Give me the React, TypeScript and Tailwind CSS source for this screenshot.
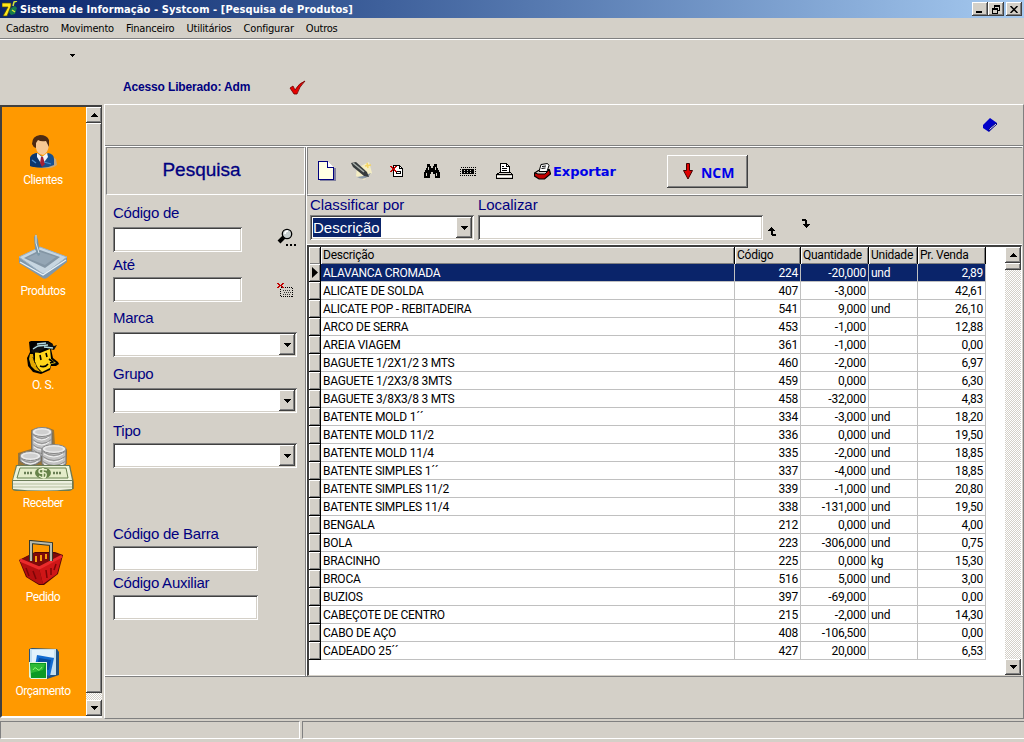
import React from 'react';

const SUNKEN = 'shadow-[inset_1px_1px_#808080,inset_-1px_-1px_#fff,inset_2px_2px_#404040,inset_-2px_-2px_#d4d0c8]';
const RAISED = 'shadow-[inset_-1px_-1px_#404040,inset_1px_1px_#fff,inset_-2px_-2px_#808080]';
const DITHER = 'bg-[repeating-conic-gradient(#d4d0c8_0_25%,#fff_0_50%)] bg-[length:2px_2px]';

const products: [string, string, string, string, string][] = [
  ['ALAVANCA CROMADA', '224', '-20,000', 'und', '2,89'],
  ['ALICATE DE SOLDA', '407', '-3,000', '', '42,61'],
  ['ALICATE POP - REBITADEIRA', '541', '9,000', 'und', '26,10'],
  ['ARCO DE SERRA', '453', '-1,000', '', '12,88'],
  ['AREIA VIAGEM', '361', '-1,000', '', '0,00'],
  ['BAGUETE 1/2X1/2 3 MTS', '460', '-2,000', '', '6,97'],
  ['BAGUETE 1/2X3/8 3MTS', '459', '0,000', '', '6,30'],
  ['BAGUETE 3/8X3/8 3 MTS', '458', '-32,000', '', '4,83'],
  ['BATENTE MOLD 1´´', '334', '-3,000', 'und', '18,20'],
  ['BATENTE MOLD 11/2', '336', '0,000', 'und', '19,50'],
  ['BATENTE MOLD 11/4', '335', '-2,000', 'und', '18,85'],
  ['BATENTE SIMPLES 1´´', '337', '-4,000', 'und', '18,85'],
  ['BATENTE SIMPLES 11/2', '339', '-1,000', 'und', '20,80'],
  ['BATENTE SIMPLES 11/4', '338', '-131,000', 'und', '19,50'],
  ['BENGALA', '212', '0,000', 'und', '4,00'],
  ['BOLA', '223', '-306,000', 'und', '0,75'],
  ['BRACINHO', '225', '0,000', 'kg', '15,30'],
  ['BROCA', '516', '5,000', 'und', '3,00'],
  ['BUZIOS', '397', '-69,000', '', '0,00'],
  ['CABEÇOTE DE CENTRO', '215', '-2,000', 'und', '14,30'],
  ['CABO DE AÇO', '408', '-106,500', '', '0,00'],
  ['CADEADO 25´´', '427', '20,000', '', '6,53'],
];

function Triangle({ up = false }: { up?: boolean }) {
  return (
    <svg width="7" height="4" viewBox="0 0 7 4" shapeRendering="crispEdges">
      <path d={up ? 'M3 0h1v1h1v1h1v1h1v1H0V3h1V2h1V1h1z' : 'M0 0h7v1H6v1H5v1H4v1H3V3H2V2H1V1H0z'} />
    </svg>
  );
}

function ScrollButton({ up = false }: { up?: boolean }) {
  return (
    <button className={`flex h-4 w-4 shrink-0 items-center justify-center bg-[#d4d0c8] ${RAISED}`}>
      <Triangle up={up} />
    </button>
  );
}

function Combo({ className, children }: { className: string; children?: React.ReactNode }) {
  return (
    <div className={`flex h-[25px] justify-between bg-white p-[2px] ${SUNKEN} ${className}`}>
      <div className="flex items-center">{children}</div>
      <button className={`flex w-4 items-center justify-center bg-[#d4d0c8] ${RAISED}`}>
        <Triangle />
      </button>
    </div>
  );
}

function Field({ label, low, className, children }: { label: string; low?: boolean; className: string; children: React.ReactNode }) {
  return (
    <div className={className}>
      <div className={`h-6 text-[15px] tracking-[-0.25px] text-[#000080] ${low ? 'leading-6' : 'leading-5'}`}>{label}</div>
      {children}
    </div>
  );
}

function TextBox({ className }: { className: string }) {
  return <div className={`h-[25px] bg-white ${SUNKEN} ${className}`} />;
}

function ClientIcon() {
  return (
    <svg width="28" height="34" viewBox="0 0 28 34">
      <path d="M7 31q13 5 21-1l-1-6-5-3z" fill="#c9a97a" />
      <path d="M1 31V23q1-4 7-5l6 4 5-4q6 1 6 6v6q-10 5-24 1z" fill="#17508f" />
      <path d="M1 31V23q1-4 7-5l5 14q-7 1-12-1z" fill="#0d376c" />
      <path d="M8 18l5 4 5-4 1 4-6 8-5-8z" fill="#f3f5fa" />
      <path d="M12 22l2 0 2 7-3 3-2-4z" fill="#a32034" />
      <path d="M5 8q0-7 8-7t7 9q-1 8-6 10-6-1-7-7z" fill="#f7c894" />
      <path d="M3 9Q3 1 11 0q7 0 9 5v7l-3-6q-5 1-8-1l-2 3v5q-3-1-4-4z" fill="#4d2a12" />
      <path d="M15 27l7 2M3 25l4 3" stroke="#4d8fd0" strokeWidth="1.2" />
    </svg>
  );
}

function TabletIcon() {
  return (
    <svg width="50" height="46" viewBox="0 0 50 46">
      <path d="M1 23L22 13l27 10v5L29 44q-3 2-6-1L1 29z" fill="#7f98ad" />
      <path d="M1 23L22 13l27 10-21 16q-3 2-6-1z" fill="#c7d6e1" stroke="#9db1c2" />
      <path d="M6 24l16-8 20 7-15 11z" fill="#8496a5" />
      <path d="M9 24l13-6 16 5-11 8z" fill="#94a6b5" />
      <path d="M2 28l23 13L48 26" fill="none" stroke="#e7f0f5" strokeWidth="1.4" />
      <path d="M16 3l2-3 2 6 2 15-2 1-3-7z" fill="#7b96a6" />
      <path d="M18 1v8l3 10" stroke="#dde9ef" fill="none" />
    </svg>
  );
}

function ServiceIcon() {
  return (
    <svg width="33" height="33" viewBox="0 0 33 33">
      <path d="M3 11L0 17l1 8 5 6 8 2 9-4 1-4 5 0 3-2-1-2-5-4-2-9 2-5-8-5-10 0-6 3z" fill="#000" />
      <path d="M3 13l-1 5 2 7 4 4 6 2-4-5-3-6-1-7z" fill="#e4a800" />
      <path d="M8 11l5 1 10-4 1 10 5 4-5 1-1 4-8 4-4-4-3-6z" fill="#ffd51a" />
      <path d="M4 10l3-5 5-4 9 0 6 4 3-1-3 5-8-2-7 4-6 1z" fill="#111" />
      <path d="M6 8l5-3 10-1M10 3l9-1M17 6l9 1" stroke="#b5dce0" strokeWidth="1.3" fill="none" />
      <path d="M13 14l1 5M19 12l1 4M13 25q5 2 8-2M22 18l4 3-3 1" stroke="#000" strokeWidth="1.6" fill="none" />
      <path d="M6 16l2 6M9 25l4 5" stroke="#332500" />
    </svg>
  );
}

function Coins({ x, y, rows, w }: { x: number; y: number; rows: number; w: number }) {
  return (
    <g>
      <path d={`M${x} ${y}v${rows * 5}q${w / 2} 9 ${w} 0v-${rows * 5}z`} fill="#c2c2c2" stroke="#6c6c6c" />
      {Array.from({ length: rows }, (_, i) => (
        <g key={i} fill="none">
          <path d={`M${x} ${y + i * 5 + 2}q${w / 2} 9 ${w} 0`} stroke="#909090" />
          <path d={`M${x + 2} ${y + i * 5 + 5}q${w / 2 - 2} 6 ${w - 5} 0`} stroke="#f3f3f3" />
        </g>
      ))}
      <ellipse cx={x + w / 2} cy={y} rx={w / 2} ry="4.5" fill="#e9e9e9" stroke="#858585" />
      <ellipse cx={x + w / 2} cy={y} rx={w / 2 - 3} ry="2.6" fill="#cfcfcf" />
    </g>
  );
}

function MoneyIcon() {
  return (
    <svg width="64" height="66" viewBox="0 0 64 66">
      <path d="M20 4q12-6 23 0l1 15q11-1 12 6l-1 14 4 0 4 17v7H1l1-9 5-16V27l13-4z" fill="#9a7637" />
      <Coins x={21} y={6} rows={4} w={20} />
      <Coins x={9} y={30} rows={1} w={21} />
      <Coins x={31} y={23} rows={3} w={24} />
      <path d="M5 39h54l3 16v8q-2 2-4 2H5q-3 0-4-2v-8z" fill="#6a7c57" />
      <path d="M6 40h52l3 14H2z" fill="#edf3d9" />
      <path d="M9 42h46l2 10H6z" fill="#e4ecc9" stroke="#67804f" />
      <path d="M2 55h59v8q-30 3-59 0z" fill="#edf0e0" />
      <path d="M2 58h59M2 61h59" stroke="#b5bf9e" />
      <ellipse cx="32" cy="47" rx="8" ry="5.5" fill="#66834a" />
      <path d="M36 44q-8-2-8 1t4 2 3 3-7 0M32 42v10" fill="none" stroke="#e8f0cd" strokeWidth="1.5" />
      <path d="M13 47h9M42 47h9" stroke="#697e55" strokeWidth="2.5" strokeDasharray="2 1" />
    </svg>
  );
}

function BasketIcon() {
  return (
    <svg className="mr-[5px]" width="44" height="46" viewBox="0 0 44 46">
      <path d="M0 20l7 17 13 8h5l14-11 5-19-8-3-20 0z" fill="#500505" />
      <path d="M1 20l19 8 23-13-9-2-19 0z" fill="#7d0a0a" />
      <path d="M1 21l7 16 12 7h4L20 28z" fill="#b60f10" />
      <path d="M20 28l4 16 14-10 5-18z" fill="#cf1617" />
      <path d="M12 20v-3M17 22v-6M22 21v-6M27 19v-5M32 17v-3" stroke="#f69a0c" strokeWidth="2" />
      <path d="M1 20l19 8 23-12" stroke="#ea2b2b" strokeWidth="3" fill="none" />
      <path d="M7 28l3 8M14 31l3 8M27 30l1 8M32 28v7M37 24l-2 6" stroke="#7d0607" strokeWidth="1.5" />
      <path d="M12 21V2l20 2v17" fill="none" stroke="#34382c" strokeWidth="4" />
      <path d="M12 21V2l20 2v17" fill="none" stroke="#b9bcad" strokeWidth="2" />
    </svg>
  );
}

function BudgetIcon() {
  return (
    <svg width="31" height="32" viewBox="0 0 31 32">
      <path d="M1 1l3-1 25 1 2 3v23l-3 1-9 3H3L1 28z" fill="#25527d" />
      <path d="M2 1h26v26H2z" fill="#c4dff1" />
      <path d="M4 2h22v7L4 18z" fill="#e3f2fb" />
      <path d="M9 7l17 3-4 18-16-4z" fill="#126bd1" />
      <path d="M11 10l12 2-2 10-13-2z" fill="#084b9e" />
      <path d="M1 14h18v17H3l-2-2z" fill="#dff7db" />
      <path d="M2 15h16v15H3z" fill="#0a9a25" />
      <path d="M3 16h14l-2 6-12 3z" fill="#2eba35" />
      <path d="M5 22q2-4 4-1t5-2" stroke="#8cf573" fill="none" />
    </svg>
  );
}

const shortcuts = [
  { label: 'Clientes', icon: <ClientIcon />, size: 'h-[81px]' },
  { label: 'Produtos', icon: <TabletIcon />, size: 'h-[111px]' },
  { label: 'O. S.', icon: <ServiceIcon />, size: 'h-[94px]' },
  { label: 'Receber', icon: <MoneyIcon />, size: 'h-[118px]' },
  { label: 'Pedido', icon: <BasketIcon />, size: 'h-[94px]' },
  { label: 'Orçamento', icon: <BudgetIcon />, size: 'h-[94px]' },
];

function Sidebar() {
  return (
    <aside className="my-px flex w-[102px] shrink-0 border-t-2 border-l-2 border-[#404040] border-b-2 border-b-white">
      <nav className="flex w-[84px] flex-col bg-[#ff9900] pr-[2px]">
        {shortcuts.map((s) => (
          <a key={s.label} className={`flex flex-col items-center justify-end ${s.size}`}>
            {s.icon}
            <span className="mt-[3px] font-['Roboto',sans-serif] text-[12px] leading-4 tracking-[-0.45px] text-white">{s.label}</span>
          </a>
        ))}
      </nav>
      <div className={`flex w-4 flex-col ${DITHER}`}>
        <ScrollButton up />
        <div className={`h-[570px] bg-[#d4d0c8] ${RAISED}`} />
        <div className="flex-1" />
        <ScrollButton />
      </div>
    </aside>
  );
}

function TitleBar() {
  return (
    <header className="flex h-[18px] items-center bg-linear-to-r from-[#0a246a] to-[#a6caf0] pr-[2px] pl-[2px]">
      <svg width="16" height="16" viewBox="0 0 16 16">
        <path d="M0 2h9v3L5 15H1l5-9H0z" fill="#ffe51a" stroke="#524b00" strokeWidth=".7" />
        <path d="M9 7l4-2 2 2-2 6-4 1-2-3z" fill="#177b4a" />
        <path d="M11 5l1-4 3-1M10 9l3 2" stroke="#d6e837" strokeWidth="1.5" fill="none" />
      </svg>
      <h1 className="mt-px ml-[2px] flex-1 whitespace-nowrap font-['DejaVu_Sans_Condensed','DejaVu_Sans',sans-serif] text-[11px] leading-4 font-bold tracking-[0.09px] text-white">
        Sistema de Informação - Systcom - [Pesquisa de Produtos]
      </h1>
      <div className="flex">
        <button className={`flex h-[14px] w-4 items-end bg-[#d4d0c8] pb-[3px] pl-1 ${RAISED}`}>
          <span className="h-[2px] w-[6px] bg-black" />
        </button>
        <button className={`flex h-[14px] w-4 items-center justify-center bg-[#d4d0c8] ${RAISED}`}>
          <svg width="9" height="9" viewBox="0 0 9 9" fill="none" stroke="#000" shapeRendering="crispEdges">
            <path d="M2.5 3V.5h5v5H6M2 1.5h6M.5 3.5h5v5h-5zM0 4.5h6" />
          </svg>
        </button>
        <button className={`ml-[2px] flex h-[14px] w-4 items-center justify-center bg-[#d4d0c8] ${RAISED}`}>
          <svg width="8" height="7" viewBox="0 0 8 7" stroke="#000" strokeWidth="1.5">
            <path d="M.5 0l7 7M7.5 0l-7 7" />
          </svg>
        </button>
      </div>
    </header>
  );
}

function MenuBar() {
  return (
    <nav className="flex h-5 items-center gap-3 pt-[2px] pl-[6px] font-['DejaVu_Sans_Condensed','DejaVu_Sans',sans-serif] text-[11px] tracking-[-0.2px]">
      {['Cadastro', 'Movimento', 'Financeiro', 'Utilitários', 'Configurar', 'Outros'].map((m) => (
        <span key={m}>{m}</span>
      ))}
    </nav>
  );
}

function PrinterIcon() {
  return (
    <svg width="17" height="17" viewBox="0 0 17 17" stroke="#000" shapeRendering="crispEdges">
      <path d="M4.500 9.500V.5h6l3 3v6" fill="#fff" />
      <path d="M10.500.5v3h3M6 3.500h2M6 5.500h5M6 7.500h5" fill="none" />
      <path d="M.5 11.500l3-2h11l2 2v4H.5z" fill="#d4d0c8" />
      <path d="M.5 11.500h16" />
      <path d="M1 13.500h15" stroke="#fff" />
    </svg>
  );
}

function ExportIcon() {
  return (
    <svg width="17" height="17" viewBox="0 0 17 17" stroke="#000">
      <path d="M0.500 10l5-3 10 0 1 4-6 5H5L.5 13z" fill="#c00000" strokeWidth="1.200" />
      <path d="M1 10l5-3.500h9.500L11 11H4z" fill="#d4d0c8" />
      <path d="M5 8.500l2-7 6.500-1 1.500 2-2 6z" fill="#fff" />
      <path d="M8 3.500l4-.5M7.500 5.500l4-.5" fill="none" />
    </svg>
  );
}

function Toolbar() {
  return (
    <div className="flex h-[48px] items-center border-t border-l border-[#808080] border-b border-b-white pl-[10px]">
      <svg width="18" height="21" viewBox="0 0 18 21" shapeRendering="crispEdges">
        <path d="M2 20h16V7h-2v11H2z" fill="#8080a0" />
        <path d="M.5.5h9l6 6v12H.5z" fill="#ffffe4" stroke="#000080" />
        <path d="M9.500.5v6h6" fill="#fff" stroke="#000080" />
      </svg>
      <svg className="ml-[15px]" width="22" height="20" viewBox="0 0 22 20">
        <path d="M6 7l12-6 3 11-8 7-8-4z" fill="#f4edc4" />
        <path d="M6 16q6 4 12-1l2-3-8 3z" fill="#8c9baa" />
        <path d="M0 2l5-1 11 10 2 5-5-1L2 6z" fill="#363b3d" />
        <path d="M2 2l11 9" stroke="#a9b0ab" strokeWidth="1.500" />
        <path d="M16 2l1 5M14 5l6-1" stroke="#f3d464" strokeWidth="1.500" fill="none" />
      </svg>
      <svg className="ml-[17px]" width="14" height="14" viewBox="0 0 14 14" shapeRendering="crispEdges">
        <path d="M3.500 1.500h6l3 3v8h-9z" fill="#fff" stroke="#000" />
        <path d="M9.500 1.500v3h3M6 7.500h4v2H6z" fill="none" stroke="#000" />
        <path d="M0 2h2v1h1v1h1V3h1V2h2v1H6v1H5v2h1v1h1v1H5V7H4V6H3v1H2v1H0V7h1V6h1V4H1V3H0z" fill="#c00000" />
      </svg>
      <svg className="ml-[20px]" width="16" height="16" viewBox="0 0 16 16" shapeRendering="crispEdges">
        <path d="M3 1h3v2h1v2h2V3h1V1h3v3l2 4 1 2v5h-5v-4H9V9H7v2H6v4H0v-5l1-2 2-4z" />
        <path d="M4 4v3M2 10v3M11 4v3M12 10v3" stroke="#d4d0c8" />
      </svg>
      <svg className="ml-[20px]" width="16" height="9" viewBox="0 0 16 9" shapeRendering="crispEdges">
        <path d="M.5.5h15v8H.5z" fill="none" stroke="#000" strokeDasharray="1 1" />
        <path d="M2 2h12v5H2z" />
        <path d="M4.500 3v3M7.500 3v3M10.500 3v3" stroke="#d4d0c8" strokeDasharray="1 1" />
      </svg>
      <span className="ml-[20px]"><PrinterIcon /></span>
      <button className="ml-[21px] flex items-center font-['DejaVu_Sans',sans-serif] text-[13px] leading-4 font-bold tracking-[-0.05px] text-[#0000e8]">
        <span className="mr-[2px]"><ExportIcon /></span>
        <span className="mt-[2px]">Exportar</span>
      </button>
      <button className={`ml-[51px] flex h-[33px] w-[81px] items-center bg-[#d4d0c8] pl-4 font-['Open_Sans',sans-serif] text-[14px] font-bold text-[#0000e8] ${RAISED}`}>
        <svg className="mr-2" width="10" height="17" viewBox="0 0 10 17">
          <path d="M3.500.5h3v7h3L5 16 .5 7.500h3z" fill="#e00000" stroke="#400000" />
        </svg>
        <span className="mt-[3px]">NCM</span>
      </button>
    </div>
  );
}

function SearchPanel() {
  return (
    <section className="w-[200px] shrink-0 border-r border-[#808080]">
      <h2 className="flex h-[48px] items-center justify-center border-t border-l border-[#808080] border-r border-r-white border-b border-b-white pr-2 pb-px text-[19px] text-[#000080] [-webkit-text-stroke:0.3px_#000080]">
        Pesquisa
      </h2>
      <div className="flex flex-col pt-2 pl-[7px]">
        <div className="flex items-end">
          <Field label="Código de" className=""><TextBox className="w-[129px]" /></Field>
          <svg className="mb-[5px] ml-[35px]" width="19" height="19" viewBox="0 0 19 19">
            <path d="M8 8l-6 6" stroke="#000" strokeWidth="4" />
            <circle cx="10" cy="6" r="4.700" fill="#c9d0d0" stroke="#000" strokeWidth="1.300" />
            <path d="M8 6q0-3 3-3" stroke="#fff" strokeWidth="1.500" fill="none" />
            <path d="M9 16h2v2H9zM13 16h2v2h-2zM17 16h2v2h-2z" />
          </svg>
        </div>
        <div className="mt-px flex items-end">
          <Field label="Até" low className=""><TextBox className="w-[129px]" /></Field>
          <svg className="mb-[5px] ml-[35px]" width="17" height="14" viewBox="0 0 17 14" shapeRendering="crispEdges">
            <path d="M3.500 4.500h12v9h-12z" fill="none" stroke="#000" strokeDasharray="1 1" />
            <path d="M6 7h8M7 9h7M6 11h8" stroke="#333" strokeDasharray="1 1" />
            <path d="M0 0h2v1h1v1h1V1h1V0h2v1H6v1H5v1h1v1h1v1H5V4H4V3H3v1H2v1H0V4h1V3h1V2H1V1H0z" fill="#c00000" />
          </svg>
        </div>
        <Field label="Marca" className="mt-[6px]"><Combo className="w-[184px]" /></Field>
        <Field label="Grupo" className="mt-[7px]"><Combo className="w-[184px]" /></Field>
        <Field label="Tipo" low className="mt-[6px]"><Combo className="w-[184px]" /></Field>
        <Field label="Código de Barra" low className="mt-[54px]"><TextBox className="w-[145px]" /></Field>
        <Field label="Código Auxiliar" low className=""><TextBox className="w-[145px]" /></Field>
      </div>
    </section>
  );
}

const COLUMNS = 'grid grid-cols-[12px_414px_66px_68px_49px_68px]';
const HEAD = 'border-r border-b border-black bg-[#d4d0c8] pl-[2px] shadow-[inset_1px_1px_#fff,inset_-1px_-1px_#808080]';

function ProductGrid() {
  return (
    <div className="flex h-[431px] border-t-2 border-l-2 border-[#404040] border-r border-r-white border-b border-b-[#d4d0c8] bg-white">
      <div className="flex-1 font-['Roboto',sans-serif] text-[12px] leading-[18px] tracking-[-0.25px]">
        <div className={`h-[17px] leading-[17px] ${COLUMNS}`}>
          {['', 'Descrição', 'Código', 'Quantidade', 'Unidade', 'Pr. Venda'].map((h, i) => (
            <div key={i} className={HEAD}>{h}</div>
          ))}
        </div>
        {products.map(([name, code, qty, unit, price], i) => {
          const cell = i === 0 ? 'border-r border-b border-[#c0c0c0] bg-[#0a246a] text-white' : 'border-r border-b border-[#c0c0c0]';
          return (
            <div key={code} className={`h-[18px] ${COLUMNS}`}>
              <div className={`flex items-center pl-[3px] ${HEAD}`}>
                {i === 0 && (
                  <svg width="6" height="11" viewBox="0 0 6 11"><path d="M0 0l6 5.500L0 11z" /></svg>
                )}
              </div>
              <div className={`h-[18px] pl-[2px] ${cell}`}>{name}</div>
              <div className={`h-[18px] pr-[2px] text-right ${cell}`}>{code}</div>
              <div className={`h-[18px] pr-[2px] text-right ${cell}`}>{qty}</div>
              <div className={`h-[18px] pl-[2px] ${cell}`}>{unit}</div>
              <div className={`h-[18px] pr-[2px] text-right ${cell}`}>{price}</div>
            </div>
          );
        })}
      </div>
      <div className={`flex w-4 flex-col ${DITHER}`}>
        <ScrollButton up />
        <div className={`h-[7px] bg-[#d4d0c8] ${RAISED}`} />
        <div className="flex-1" />
        <ScrollButton />
      </div>
    </div>
  );
}

function Results() {
  return (
    <section className="min-w-0 flex-1 border-l border-white pr-px">
      <Toolbar />
      <div className="flex h-[50px] border-t border-[#808080] border-b border-b-white pl-[3px]">
        <div>
          <div className="h-[19px] text-[15px] leading-[18px] tracking-[-0.05px] text-[#000080]">Classificar por</div>
          <Combo className="w-[164px]">
            <span className="ml-px bg-[#0a246a] pr-px text-[15px] leading-[19px] text-white">Descrição</span>
          </Combo>
        </div>
        <div className="ml-1">
          <div className="h-[19px] text-[15px] leading-[18px] tracking-[-0.05px] text-[#000080]">Localizar</div>
          <TextBox className="w-[285px]" />
        </div>
        <svg className="mt-[31px] ml-[5px]" width="8" height="9" viewBox="0 0 8 9" shapeRendering="crispEdges">
          <path d="M3 0h1v1h1v1h1v1h1v1H5v3h3v2H4V8H3V4H0V3h1V2h1V1h1z" />
        </svg>
        <svg className="mt-[23px] ml-[26px]" width="8" height="9" viewBox="0 0 8 9" shapeRendering="crispEdges">
          <path d="M0 0h4v1h1v4h3v1H7v1H6v1H5v1H4V8H3V7H2V6H1V5h2V2H0z" />
        </svg>
      </div>
      <ProductGrid />
    </section>
  );
}

export default function App() {
  return (
    <div className="flex h-[742px] w-[1024px] flex-col overflow-hidden bg-[#d4d0c8] font-['Liberation_Sans',Arial,sans-serif] text-black">
      <TitleBar />
      <MenuBar />
      <div className="flex h-[66px] shrink-0 flex-col border-t border-[#808080] shadow-[inset_0_1px_#fff]">
        <div className="flex h-[40px] items-start pt-[15px] pl-[70px]">
          <svg width="5" height="3" viewBox="0 0 5 3" shapeRendering="crispEdges"><path d="M0 0h5v1H4v1H3v1H2V2H1V1H0z" /></svg>
        </div>
        <div className="flex items-center pl-[123px]">
          <span className="text-[12px] leading-4 font-bold tracking-[-0.15px] text-[#000080]">Acesso Liberado: Adm</span>
          <svg className="ml-[39px]" width="17" height="15" viewBox="0 0 17 15">
            <path d="M1 8l3-2 2 4q4-7 10-9-6 6-8 13H5z" fill="#e60000" stroke="#700000" strokeWidth=".8" />
          </svg>
        </div>
      </div>
      <div className="flex h-[615px] shrink-0">
        <Sidebar />
        <main className="ml-[2px] flex min-w-0 flex-1 flex-col border-t border-l border-white border-r border-r-[#808080] border-b border-b-[#808080]">
          <div className="flex h-[40px] justify-end pt-[13px] pr-[25px]">
            <svg width="16" height="15" viewBox="0 0 16 15">
              <path d="M1 7L8 0l7 5-8 9-6-4z" fill="#0000c8" />
              <path d="M7 11l7-6 1 1-8 7z" fill="#fff" stroke="#000080" />
            </svg>
          </div>
          <div className="flex h-[532px] border-t border-b border-[#808080] shadow-[inset_0_1px_#fff,inset_0_-1px_#fff]">
            <div className="flex w-full pt-px pl-px">
              <SearchPanel />
              <Results />
            </div>
          </div>
        </main>
      </div>
      <footer className="mt-[2px] flex h-[18px] gap-[2px]">
        <div className="w-[300px] border-t border-l border-[#808080] border-r border-r-white border-b border-b-white" />
        <div className="flex-1 border-t border-l border-[#808080] border-b border-b-white" />
      </footer>
    </div>
  );
}
